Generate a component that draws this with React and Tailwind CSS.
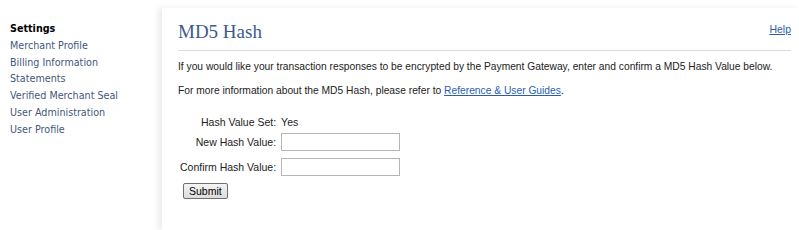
import React from 'react';

const navItems = [
  'Merchant Profile',
  'Billing Information',
  'Statements',
  'Verified Merchant Seal',
  'User Administration',
  'User Profile',
];

function Sidebar() {
  return (
    <div className="w-[162px] shrink-0 pl-[10px] pt-[21px] font-['DejaVu_Sans',Verdana,sans-serif] text-[9.6px] leading-[16.8px]">
      <div className="font-bold text-black">Settings</div>
      {navItems.map(item => (
        <div key={item}>
          <a href="#" className="text-[#44577c]">{item}</a>
        </div>
      ))}
    </div>
  );
}

function HashForm() {
  return (
    <table className="mt-[17px] ml-[2px] border-separate border-spacing-0 text-[10.5px] leading-[14px] text-[#222]">
      <tbody>
        <tr>
          <td className="text-right pr-[5px] h-[14px]">Hash Value Set:</td>
          <td>Yes</td>
        </tr>
        <tr>
          <td className="text-right pr-[5px] pt-[4px]">New Hash Value:</td>
          <td className="pt-[4px]">
            <input type="text" className="block w-[119px] h-[18px] border border-[#b5b5b5] bg-white" />
          </td>
        </tr>
        <tr>
          <td className="text-right pr-[5px] pt-[7px]">Confirm Hash Value:</td>
          <td className="pt-[7px]">
            <input type="text" className="block w-[119px] h-[18px] border border-[#b5b5b5] bg-white" />
          </td>
        </tr>
        <tr>
          <td colSpan={2} className="pt-[7px] pl-[3px]">
            <button className="h-[16px] px-[5px] border border-[#707070] rounded-[2px] bg-gradient-to-b from-[#f4f4f4] to-[#dcdcdc] text-[10.5px] leading-[14px] text-black">
              Submit
            </button>
          </td>
        </tr>
      </tbody>
    </table>
  );
}

export default function App() {
  return (
    <div className="w-[799px] h-[230px] bg-white flex overflow-hidden font-['Liberation_Sans',Arial,sans-serif]">
      <Sidebar />
      <div className="flex-1 mt-[8px] pl-[16px] pr-[8px] bg-white shadow-[-4px_0_6px_rgba(0,0,0,0.08)]">
        <div className="flex items-end justify-between h-[43px] pb-[6px] border-b border-[#dcdcdc]">
          <h1 className="font-['Liberation_Serif',Georgia,serif] text-[19px] leading-[24px] text-[#3d5a8c]">MD5 Hash</h1>
          <a href="#" className="text-[10.5px] text-[#2a5db0] underline mb-[6px]">Help</a>
        </div>
        <p className="mt-[9px] text-[10.25px] text-[#222] leading-[14px]">
          If you would like your transaction responses to be encrypted by the Payment Gateway, enter and confirm a MD5 Hash Value below.
        </p>
        <p className="mt-[10px] text-[10.25px] text-[#222] leading-[14px]">
          For more information about the MD5 Hash, please refer to{' '}
          <a href="#" className="text-[#2a5db0] underline">Reference &amp; User Guides</a>.
        </p>
        <HashForm />
      </div>
    </div>
  );
}
